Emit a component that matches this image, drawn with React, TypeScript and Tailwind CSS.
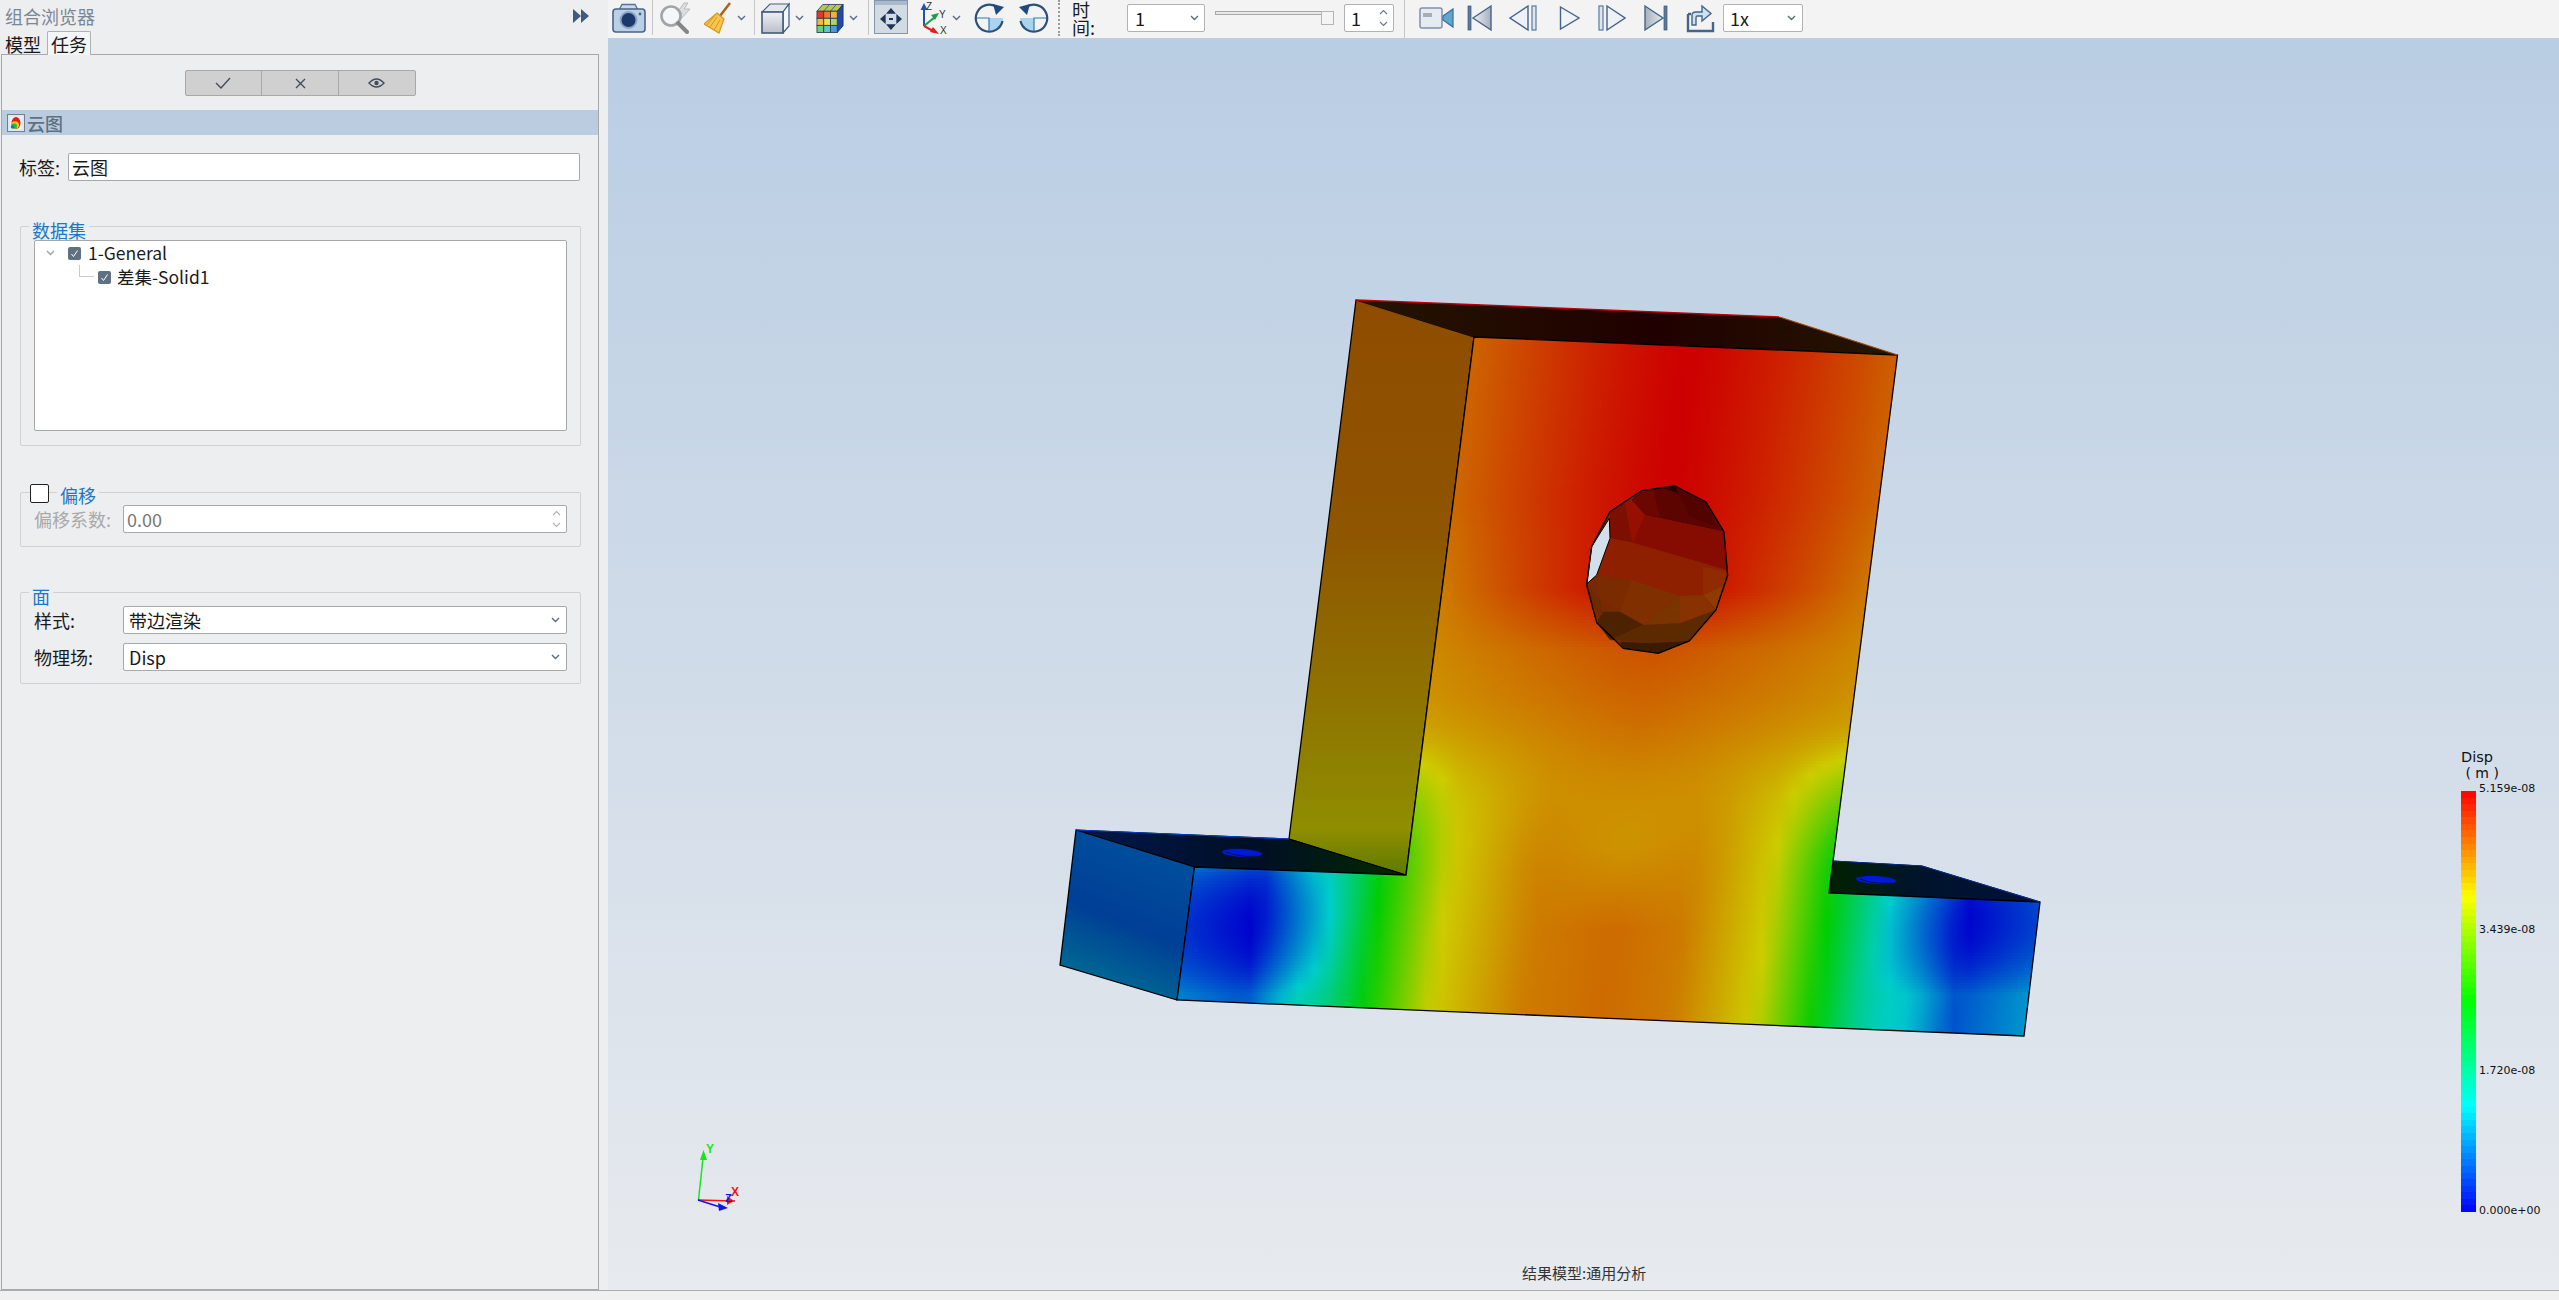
import React from "react";

/* ---------- scalar field and colour map of the result drawing ---------- */
const lerpTable = (tab: number[][], v: number) => {
  if (v <= tab[0][0]) return tab[0][1];
  for (let i = 1; i < tab.length; i++) {
    if (v <= tab[i][0]) {
      const k = (v - tab[i - 1][0]) / (tab[i][0] - tab[i - 1][0]);
      return tab[i - 1][1] + k * (tab[i][1] - tab[i - 1][1]);
    }
  }
  return tab[tab.length - 1][1];
};
const clamp = (v: number, a = 0, b = 1) => Math.max(a, Math.min(b, v));
const mapColor = (t: number, m: number) => {
  const st = [[0, 0, 1], [0, 1, 1], [0, 1, 0], [1, 1, 0], [1, 0, 0]];
  const p = clamp(t) * 4;
  const i = Math.min(3, Math.floor(p));
  const f = p - i;
  const c = [0, 1, 2].map((k) => Math.round((st[i][k] + (st[i + 1][k] - st[i][k]) * f) * m));
  return `rgb(${c[0]},${c[1]},${c[2]})`;
};
const tCenter = [[335, 1], [590, 1], [650, 0.9], [780, 0.84], [840, 0.82], [930, 0.87], [1040, 0.87]];
const tEdge = [[335, 0.88], [500, 0.875], [700, 0.82], [800, 0.76], [900, 0.75]];
const lowL = [[0, 0.87], [80, 0.85], [173, 0.75], [239, 0.5], [286, 0.25], [359, 0], [440, 0.07]];
const lowR = [[0, 0.87], [70, 0.85], [152, 0.75], [212, 0.5], [271, 0.25], [351, 0], [440, 0.1]];
const field = (x: number, y: number) => {
  const u = x + 0.13 * (y - 927);
  const d = Math.abs(u - 1614);
  const g = 1 - Math.pow(Math.min(d, 215) / 215, 1.3);
  const up = lerpTable(tEdge, y) + (lerpTable(tCenter, y) - lerpTable(tEdge, y)) * g;
  let low = lerpTable(u < 1614 ? lowL : lowR, d);
  low -= 0.05 * clamp((930 - y) / 80) * clamp(1 - d / 100);
  low += 0.1 * Math.min(1, ((y - 925) / 70) ** 2) * clamp((d - 250) / 60);
  const s0 = clamp((y - 720) / 160);
  const s = s0 * s0 * (3 - 2 * s0);
  return up * (1 - s) + low * s;
};
const strips: { y: number; stops: { o: number; c: string }[] }[] = [];
for (let y = 335; y < 1040; y += 3) {
  const stops: { o: number; c: string }[] = [];
  for (let x = 1170; x <= 2050; x += 16) {
    stops.push({ o: (x - 1170) / 880, c: mapColor(field(x, y + 1.5), 205) });
  }
  strips.push({ y, stops });
}
const bands = Array.from({ length: 64 }, (_, i) => mapColor(1 - (i + 0.5) / 64, 255));

/* ---------- the model ---------- */
const Model = () => (
  <svg viewBox="608 38 1951 1252" className="absolute inset-0 w-full h-full">
    <defs>
      {strips.map((s) => (
        <linearGradient key={s.y} id={`st${s.y}`} gradientUnits="userSpaceOnUse" x1="1170" x2="2050" y1="0" y2="0">
          {s.stops.map((p, i) => (
            <stop key={i} offset={p.o} stopColor={p.c} />
          ))}
        </linearGradient>
      ))}
      <clipPath id="frontClip">
        <polygon points="1474,337 1897.5,355 1829,893 2040,902 2024,1036 1177,1000 1194.5,867 1406,875" />
      </clipPath>
      <linearGradient id="sideG" gradientUnits="userSpaceOnUse" x1="0" y1="300" x2="0" y2="875">
        <stop offset="0" stopColor="#8f4c00" />
        <stop offset="0.4" stopColor="#8f5500" />
        <stop offset="0.7" stopColor="#8f7400" />
        <stop offset="0.92" stopColor="#8f8e00" />
        <stop offset="1" stopColor="#5d7a00" />
      </linearGradient>
      <linearGradient id="roofG" gradientUnits="userSpaceOnUse" x1="1360" y1="0" x2="1895" y2="0">
        <stop offset="0" stopColor="#241400" />
        <stop offset="0.55" stopColor="#200000" />
        <stop offset="1" stopColor="#241600" />
      </linearGradient>
      <linearGradient id="baseTL" gradientUnits="userSpaceOnUse" x1="1090" y1="0" x2="1400" y2="0">
        <stop offset="0" stopColor="#00164a" />
        <stop offset="0.55" stopColor="#000f24" />
        <stop offset="1" stopColor="#002800" />
      </linearGradient>
      <linearGradient id="baseTR" gradientUnits="userSpaceOnUse" x1="1830" y1="0" x2="2040" y2="0">
        <stop offset="0" stopColor="#002200" />
        <stop offset="0.4" stopColor="#00142a" />
        <stop offset="1" stopColor="#00103c" />
      </linearGradient>
      <linearGradient id="baseS" gradientUnits="userSpaceOnUse" x1="1150" y1="840" x2="1090" y2="985">
        <stop offset="0" stopColor="#00509e" />
        <stop offset="0.55" stopColor="#003f96" />
        <stop offset="1" stopColor="#006c92" />
      </linearGradient>
    </defs>

    <polygon points="1356,300 1474,337 1406,875 1289,839" fill="url(#sideG)" stroke="#000" strokeWidth="1.3" />
    <polygon points="1356,300 1779.5,317 1897.5,355 1474,337" fill="url(#roofG)" />
    <polygon points="1076,830 1289,839 1406,875 1194.5,867" fill="url(#baseTL)" stroke="#000" strokeWidth="1" />
    <polygon points="1832.5,861 1922,866 2040,902 1829,893" fill="url(#baseTR)" stroke="#000" strokeWidth="1" />
    <polygon points="1076,830 1194.5,867 1177,1000 1060,965" fill="url(#baseS)" stroke="#000" strokeWidth="1.3" />

    <g clipPath="url(#frontClip)">
      {strips.map((s) => (
        <rect key={s.y} x="1170" y={s.y} width="880" height="3.5" fill={`url(#st${s.y})`} />
      ))}
    </g>
    <polygon
      points="1474,337 1897.5,355 1829,893 2040,902 2024,1036 1177,1000 1194.5,867 1406,875"
      fill="none"
      stroke="#000"
      strokeWidth="1.3"
    />
    <path d="M1356 300 L1779.5 317" stroke="#b80000" strokeWidth="1.5" />
    <path d="M1779.5 317 L1897.5 355" stroke="#a04a00" strokeWidth="1.3" />
    <path d="M1076 830 L1289 839" stroke="#0040c0" strokeWidth="1.2" />
    <path d="M1832.5 861 L1922 866 L2040 902" stroke="#003090" strokeWidth="1.2" fill="none" />

    <ellipse cx="1242" cy="853" rx="20" ry="4" fill="#0018d8" transform="rotate(3 1242 853)" />
    <path d="M1226 852 Q1242 858 1258 856" stroke="#00104a" strokeWidth="1" fill="none" />
    <ellipse cx="1876" cy="880" rx="20" ry="4" fill="#0018d8" transform="rotate(3 1876 880)" />
    <path d="M1860 879 Q1876 885 1892 883" stroke="#00104a" strokeWidth="1" fill="none" />

    {/* hole */}
    <g transform="translate(1560 470) scale(0.3333)">
      <polygon points="345,48 438,96 492,185 503,316 468,420 388,513 295,550 190,535 110,458 80,345 95,230 150,125 245,62" fill="#7a2800" />
      <polygon points="245,62 345,48 438,96 492,185 255,135 215,90" fill="#5c0500" />
      <polygon points="310,55 345,48 395,85" fill="#2a0000" />
      <polygon points="240,65 215,90 255,135 300,140 280,60" fill="#6a0800" />
      <polygon points="345,48 438,96 470,170 390,140" fill="#520300" />
      <polygon points="150,125 195,100 218,218 150,205" fill="#7d0f00" />
      <polygon points="195,100 215,90 255,135 218,218" fill="#960f00" />
      <polygon points="255,135 492,185 500,300 218,218" fill="#860b00" />
      <polygon points="150,205 218,218 500,300 503,316 495,345 430,375 360,378 285,365 110,315" fill="#8e2000" />
      <polygon points="430,290 500,305 495,345 430,375" fill="#902a00" />
      <polygon points="110,315 215,330 180,425 122,390" fill="#7a2c00" />
      <polygon points="215,330 360,378 250,465 180,425" fill="#803000" />
      <polygon points="360,378 360,460 250,465" fill="#7a3400" />
      <polygon points="360,378 430,375 465,420 360,460" fill="#873200" />
      <polygon points="430,375 495,345 468,420" fill="#8f3a00" />
      <polygon points="80,345 122,390 130,458 95,395" fill="#6b2a00" />
      <polygon points="110,458 130,425 180,425 250,465 150,510" fill="#4d2200" />
      <polygon points="150,510 250,465 360,460 468,420 388,513 270,520" fill="#5d2a00" />
      <polygon points="180,515 270,520 388,513 295,550 190,535" fill="#3a1a00" />
      <polygon points="148,145 150,205 110,315 80,342 95,230" fill="#d3dfeb" stroke="#000" strokeWidth="3" />
      <polygon points="345,48 438,96 492,185 503,316 468,420 388,513 295,550 190,535 110,458 80,345 95,230 150,125 245,62" fill="none" stroke="#000" strokeWidth="4" />
    </g>

    {/* triad */}
    <g>
      <path d="M698.5 1200 L703 1158" stroke="#19e619" strokeWidth="1.5" />
      <polygon points="703.5,1150 700,1160 707,1160" fill="#19e619" />
      <path d="M698 1200 L735 1201" stroke="#f01414" strokeWidth="1.5" />
      <polygon points="734,1201 727,1196 727,1205" fill="#f01414" />
      <path d="M698 1200 L720 1207" stroke="#1414e6" strokeWidth="1.5" />
      <polygon points="728,1208 718,1203 719,1211" fill="#1414e6" />
      <text x="706" y="1153" fontSize="12" fontWeight="700" fill="#19e619" fontFamily="Liberation Sans, sans-serif">Y</text>
      <text x="731" y="1196" fontSize="12" fontWeight="700" fill="#f01414" fontFamily="Liberation Sans, sans-serif">X</text>
      <text x="725" y="1202" fontSize="11" fontWeight="700" fill="#1414e6" fontFamily="Liberation Sans, sans-serif">Z</text>
    </g>
  </svg>
);

/* ---------- small controls ---------- */
const Chevron = ({ className = "", color = "#5a6b7c" }: { className?: string; color?: string }) => (
  <svg viewBox="0 0 9 6" className={`w-[9px] h-[6px] shrink-0 ${className}`}>
    <path d="M1 1 L4.5 4.5 L8 1" fill="none" stroke={color} strokeWidth="1.4" />
  </svg>
);
const SpinArrows = ({ color = "#6a7a8a" }: { color?: string }) => (
  <div className="flex flex-col items-center gap-[6px]">
    <svg viewBox="0 0 9 6" className="w-[9px] h-[6px]">
      <path d="M1 5 L4.5 1.5 L8 5" fill="none" stroke={color} strokeWidth="1.2" />
    </svg>
    <svg viewBox="0 0 9 6" className="w-[9px] h-[6px]">
      <path d="M1 1 L4.5 4.5 L8 1" fill="none" stroke={color} strokeWidth="1.2" />
    </svg>
  </div>
);
const Check = () => (
  <div className="w-[13px] h-[13px] rounded-[2px] bg-[#5f7180] flex items-center justify-center shrink-0">
    <svg viewBox="0 0 9 9" className="w-[9px] h-[9px]">
      <path d="M1.5 5 L3.5 7.5 L7.5 1.5" fill="none" stroke="#fff" strokeWidth="1" />
    </svg>
  </div>
);
const Select = ({ label }: { label: string }) => (
  <div className="h-[28px] w-[444px] bg-white border border-[#a6a8aa] rounded-[2px] flex items-center justify-between pl-[5px] pr-[5px] text-[18px] text-[#1a1a1a] leading-none">
    <span>{label}</span>
    <Chevron className="mr-[1px]" />
  </div>
);
const Group = ({ height, className = "", children }: { height: string; className?: string; children: React.ReactNode }) => (
  <div className={`relative ml-[18px] w-[561px] border border-[#cfd1d3] rounded-[2px] ${height} ${className}`}>{children}</div>
);
const Sep = ({ h = "h-[35px]", ml }: { h?: string; ml: string }) => (
  <div className={`${ml} ${h} w-px bg-[#c4c6c8] self-start shrink-0`} />
);

/* ---------- toolbar icons ---------- */
const Camera = () => (
  <svg viewBox="0 0 34 30" className="w-[34px] h-[30px] ml-[4px] shrink-0">
    <path d="M7 7 L10 1.5 H23 L26 7" fill="#c9d9ea" stroke="#5a7496" strokeWidth="1.4" />
    <rect x="1" y="6" width="32" height="23" rx="3" fill="#bad0e7" stroke="#4a6488" strokeWidth="1.6" />
    <circle cx="16.5" cy="17" r="9" fill="#8ea4bf" />
    <circle cx="16.5" cy="17" r="7" fill="#1d386c" />
    <circle cx="28" cy="11" r="1.4" fill="#4a6488" />
  </svg>
);
const Magnifier = () => (
  <svg viewBox="0 0 33 32" className="w-[33px] h-[32px] ml-[6px] shrink-0">
    <polygon points="25,1 18,11 23,11 20,19 31,7 25,7 29,1" fill="#dcdee0" stroke="#b8babc" strokeWidth="1" />
    <circle cx="12" cy="14" r="9.5" fill="#f4f6f8" stroke="#a2a4a6" strokeWidth="2.6" />
    <path d="M19 21 L28 30" stroke="#868686" strokeWidth="4" strokeLinecap="round" />
  </svg>
);
const Broom = () => (
  <svg viewBox="0 0 27 32" className="w-[27px] h-[32px] ml-[12px] shrink-0">
    <path d="M26 1 L16 14" stroke="#a9651a" strokeWidth="2.6" />
    <polygon points="13,11 20,17 15,31 0,22" fill="#f5c550" stroke="#d9961e" strokeWidth="1.2" />
    <path d="M13 15 L6 25 M16 18 L10 28 M12 12 L3 23" stroke="#d9961e" strokeWidth="1" />
  </svg>
);
const Cube = () => (
  <svg viewBox="0 0 29 32" className="w-[29px] h-[32px] ml-[6px] shrink-0">
    <defs>
      <linearGradient id="cubeF" x1="0" y1="0" x2="0" y2="1">
        <stop offset="0" stopColor="#eef0f3" />
        <stop offset="1" stopColor="#b9c0ca" />
      </linearGradient>
    </defs>
    <polygon points="1,10 9,2 28,2 22,10" fill="#e4e7eb" stroke="#4a5f80" strokeWidth="1.2" />
    <polygon points="22,10 28,2 28,24 22,31" fill="#f5f6f8" stroke="#2f5a98" strokeWidth="1.2" />
    <rect x="1" y="10" width="21" height="21" fill="url(#cubeF)" stroke="#44597a" strokeWidth="1.6" />
  </svg>
);
const ColorCube = () => {
  const cols = [
    ["#e0392c", "#f0762c", "#f4b13a"],
    ["#f2b93a", "#e8e24a", "#a8dc58"],
    ["#6ad080", "#58c8c8", "#4a9ae0"],
  ];
  return (
    <svg viewBox="0 0 29 32" className="w-[28px] h-[32px] ml-[12px] shrink-0">
      <polygon points="1,9 7,2 28,2 22,9" fill="#b6c850" stroke="#3c4e70" strokeWidth="1" />
      <path d="M8 9 L14 2 M15 9 L21 2" stroke="#3c4e70" strokeWidth="0.8" />
      <polygon points="22,9 28,2 28,24 22,31" fill="#2048a8" stroke="#24386a" strokeWidth="1" />
      {cols.map((r, i) =>
        r.map((c, j) => <rect key={`${i}${j}`} x={1 + j * 7} y={9 + i * 7.33} width="7" height="7.33" fill={c} stroke="#2e3a55" strokeWidth="0.9" />),
      )}
    </svg>
  );
};
const MoveBtn = () => (
  <svg viewBox="0 0 34 34" className="w-[34px] h-[34px] ml-[5px] shrink-0 self-start">
    <rect x="0.5" y="0.5" width="33" height="33" fill="#d2dae3" stroke="#8494a9" />
    <rect x="1" y="1" width="32" height="4" fill="#a9bace" />
    <g fill="#1f3558" stroke="#1f3558" strokeWidth="1.3">
      <path d="M17 9 L13.5 13 H20.5 Z M17 29 L13.5 25 H20.5 Z M7 19 L11 15.5 V22.5 Z M27 19 L23 15.5 V22.5 Z" />
    </g>
    <rect x="15" y="18" width="4" height="2" fill="#1f3558" />
  </svg>
);
const Axes = () => (
  <svg viewBox="0 0 29 34" className="w-[29px] h-[34px] ml-[12px] shrink-0">
    <path d="M4 25 V8" stroke="#2452a8" strokeWidth="2" />
    <polygon points="4,2 0.5,9 7.5,9" fill="#2452a8" />
    <path d="M4 25 L15 16" stroke="#1e9a50" strokeWidth="2" />
    <polygon points="19,12 11,14 15,19" fill="#1e9a50" />
    <path d="M4 25 L15 31" stroke="#e02020" strokeWidth="2" />
    <polygon points="19,33 10,31 13,26" fill="#e02020" />
    <text x="6" y="9" fontSize="10" fill="#333" fontFamily="Liberation Sans, sans-serif">Z</text>
    <text x="19" y="17" fontSize="10" fill="#333" fontFamily="Liberation Sans, sans-serif">Y</text>
    <text x="20" y="33" fontSize="10" fill="#333" fontFamily="Liberation Sans, sans-serif">X</text>
  </svg>
);
const Rotate = ({ flip, ml }: { flip?: boolean; ml: string }) => (
  <svg viewBox="0 0 31 30" className={`w-[31px] h-[30px] ${ml} shrink-0`} style={flip ? { transform: "scaleX(-1)" } : undefined}>
    <path d="M15 15 H29 A14 14 0 0 1 15 29 Z" fill="#a8d4ef" />
    <path d="M1.5 15 H15 V29" fill="none" stroke="#2e7ab8" strokeWidth="1.2" />
    <path d="M22 3.5 A13.5 13.5 0 1 0 28.5 18 " fill="none" stroke="#2e5078" strokeWidth="2.2" />
    <polygon points="19,1 30,4 22,12" fill="#1f4a80" />
  </svg>
);
const Video = () => (
  <svg viewBox="0 0 35 28" className="w-[35px] h-[28px] ml-[14px] shrink-0">
    <rect x="1" y="4" width="22" height="20" rx="2" fill="#e6ebf1" stroke="#7d92ac" strokeWidth="1.5" />
    <rect x="4" y="9" width="9" height="4" fill="#a8adb3" />
    <polygon points="24,12 34,5 34,23 24,16" fill="#5ea7d0" stroke="#3f6d96" strokeWidth="1.2" />
  </svg>
);
const mediaGrad = (id: string, a: string, b: string) => (
  <linearGradient id={id} x1="0" y1="0" x2="1" y2="0">
    <stop offset="0" stopColor={a} />
    <stop offset="1" stopColor={b} />
  </linearGradient>
);
const First = () => (
  <svg viewBox="0 0 25 28" className="w-[25px] h-[28px] ml-[13px] shrink-0">
    <defs>{mediaGrad("mF", "#eef1f4", "#a6b0bc")}</defs>
    <rect x="1" y="2" width="3" height="24" fill="#5c7aa0" stroke="#3a5478" strokeWidth="0.7" />
    <polygon points="6,14 24,2 24,26" fill="url(#mF)" stroke="#44648c" strokeWidth="1.4" />
  </svg>
);
const Prev = () => (
  <svg viewBox="0 0 29 28" className="w-[29px] h-[28px] ml-[17px] shrink-0">
    <polygon points="1,14 19,2 19,26" fill="#eef1f5" stroke="#44648c" strokeWidth="1.4" />
    <rect x="23" y="2" width="4" height="24" fill="#dfe5ec" stroke="#5c7aa0" strokeWidth="1.2" />
  </svg>
);
const Play = () => (
  <svg viewBox="0 0 21 28" className="w-[21px] h-[28px] ml-[21px] shrink-0">
    <polygon points="1.5,3 20,14 1.5,25" fill="#f1f4f7" stroke="#44648c" strokeWidth="1.4" />
  </svg>
);
const Next = () => (
  <svg viewBox="0 0 28 28" className="w-[28px] h-[28px] ml-[18px] shrink-0">
    <rect x="1" y="2" width="4" height="24" fill="#dfe5ec" stroke="#5c7aa0" strokeWidth="1.2" />
    <polygon points="9,2 27,14 9,26" fill="#eef1f5" stroke="#44648c" strokeWidth="1.4" />
  </svg>
);
const Last = () => (
  <svg viewBox="0 0 24 28" className="w-[24px] h-[28px] ml-[18px] shrink-0">
    <defs>{mediaGrad("mL", "#a6b0bc", "#e6eaef")}</defs>
    <polygon points="1,2 19,14 1,26" fill="url(#mL)" stroke="#44648c" strokeWidth="1.4" />
    <rect x="20" y="2" width="3" height="24" fill="#5c7aa0" stroke="#3a5478" strokeWidth="0.7" />
  </svg>
);
const ExportIcon = () => (
  <svg viewBox="0 0 29 30" className="w-[29px] h-[30px] ml-[18px] shrink-0">
    <path d="M2 11 V28 H27 V19" fill="none" stroke="#44648c" strokeWidth="2.4" />
    <path d="M2 11 H5" fill="none" stroke="#44648c" strokeWidth="2.4" />
    <path d="M6 22 V12 Q6 9 10 9 H16 V3 L25 10.5 L16 18 V13 H11 Q10 13 10 15 V22 Z" fill="#cfe0ef" stroke="#44648c" strokeWidth="1.4" />
  </svg>
);

const Toolbar = () => (
  <div className="h-[38px] pb-[2px] bg-[#f3f3f3] flex items-center text-[18px] text-[#1a1a1a] leading-none">
    <Camera />
    <Sep ml="ml-[6px]" />
    <Magnifier />
    <Broom />
    <Chevron className="ml-[6px]" />
    <Sep ml="ml-[8px]" />
    <Cube />
    <Chevron className="ml-[5px]" />
    <ColorCube />
    <Chevron className="ml-[5px]" />
    <Sep ml="ml-[10px]" />
    <MoveBtn />
    <Axes />
    <Chevron className="ml-[3px]" />
    <Rotate ml="ml-[13px]" />
    <Rotate ml="ml-[13px]" flip />
    <div className="ml-[9px] h-[36px] w-[2px] border-l-2 border-dotted border-[#9a9a9a] self-start shrink-0" />
    <span className="ml-[12px] w-[40px] shrink-0">时间:</span>
    <div className="ml-[15px] w-[78px] h-[28px] bg-white border border-[#b0b2b4] rounded-[2px] flex items-center justify-between pl-[7px] pr-[5px] shrink-0">
      <span>1</span>
      <Chevron />
    </div>
    <div className="ml-[10px] w-[119px] h-[28px] relative shrink-0">
      <div className="absolute left-0 top-[7px] w-[108px] h-[4px] bg-[#e8e8e8] border border-[#a8a8a8]" />
      <div className="absolute right-0 top-[7px] w-[13px] h-[14px] bg-[#f4f4f4] border border-[#b4b4b4]" />
    </div>
    <div className="ml-[10px] w-[50px] h-[28px] bg-white border border-[#b0b2b4] rounded-[2px] flex items-center justify-between pl-[6px] pr-[5px] shrink-0">
      <span>1</span>
      <SpinArrows />
    </div>
    <Sep ml="ml-[10px]" h="h-[38px]" />
    <Video />
    <First />
    <Prev />
    <Play />
    <Next />
    <Last />
    <ExportIcon />
    <div className="ml-[8px] w-[80px] h-[28px] bg-white border border-[#b0b2b4] rounded-[2px] flex items-center justify-between pl-[6px] pr-[6px] shrink-0">
      <span>1x</span>
      <Chevron />
    </div>
  </div>
);

const Legend = () => (
  <div className="absolute left-[1853px] top-[711px] font-['DejaVu_Sans',sans-serif] text-[#111]">
    <div className="text-[14.5px] leading-[16px] h-[16px]">Disp</div>
    <div className="text-[14px] leading-[16px] h-[16px] whitespace-pre"> ( m )</div>
    <div className="h-[10px]" />
    <div className="flex">
      <div className="w-[15px] h-[421px] flex flex-col">
        {bands.map((c, i) => (
          <div key={i} className="flex-1" style={{ background: c }} />
        ))}
      </div>
      <div className="relative ml-[3px] w-[70px] text-[11px] leading-[14px]">
        <span className="absolute left-0 top-[-9px]">5.159e-08</span>
        <span className="absolute left-0 top-[132px]">3.439e-08</span>
        <span className="absolute left-0 top-[273px]">1.720e-08</span>
        <span className="absolute left-0 top-[413px]">0.000e+00</span>
      </div>
    </div>
  </div>
);

const LeftPanel = () => (
  <div className="w-[608px] h-full bg-[#eceef0] shrink-0 text-[18px] leading-none text-[#1a1a1a]">
    <div className="h-[31px] flex items-center justify-between pl-[5px] pr-[19px]">
      <span className="text-[#7b8794]">组合浏览器</span>
      <svg viewBox="0 0 16 14" className="w-[16px] h-[14px]">
        <path d="M0 0 L8 7 L0 14 Z M8 0 L16 7 L8 14 Z" fill="#3f5b7e" />
      </svg>
    </div>
    <div className="h-[23px] flex items-end pl-[5px]">
      <span className="h-[21px] w-[36px] flex items-center">模型</span>
      <div className="relative z-10 ml-[6px] -mb-px h-[24px] w-[44px] bg-[#f4f5f6] border border-[#aeb0b2] border-b-0 rounded-t-[2px] flex items-center justify-center">
        任务
      </div>
    </div>
    <div className="ml-px w-[598px] h-[1236px] border border-[#a6a8aa] pt-[15px]">
      <div className="mx-auto w-[231px] h-[26px] flex bg-[#d0d0d0] border border-[#a8a8a8] rounded-[2px]">
        <div className="flex-1 flex items-center justify-center">
          <svg viewBox="0 0 16 12" className="w-[16px] h-[12px]">
            <path d="M1 6 L6 11 L15 1" fill="none" stroke="#3e4e60" strokeWidth="1.4" />
          </svg>
        </div>
        <div className="flex-1 flex items-center justify-center border-x border-[#a8a8a8]">
          <svg viewBox="0 0 11 11" className="w-[11px] h-[11px]">
            <path d="M1 1 L10 10 M10 1 L1 10" stroke="#3e4e60" strokeWidth="1.4" />
          </svg>
        </div>
        <div className="flex-1 flex items-center justify-center">
          <svg viewBox="0 0 18 12" className="w-[17px] h-[12px]">
            <path d="M1 6 Q9 -2.5 17 6 Q9 14.5 1 6 Z" fill="none" stroke="#3e4e60" strokeWidth="1.4" />
            <circle cx="9" cy="6" r="2.3" fill="#3e4e60" />
          </svg>
        </div>
      </div>

      <div className="mt-[14px] h-[25px] bg-[#bacde0] flex items-center pl-[5px]">
        <svg viewBox="0 0 18 18" className="w-[18px] h-[18px] shrink-0">
          <rect x="0.5" y="0.5" width="17" height="17" fill="#dfe7ef" stroke="#6f8094" />
          <rect x="3" y="3" width="12" height="12" fill="#f0f3f6" />
          <ellipse cx="9" cy="9" rx="4.5" ry="6" fill="#e81c10" />
          <ellipse cx="8" cy="11" rx="4" ry="3.8" fill="#f4c414" />
          <ellipse cx="7" cy="12" rx="3" ry="2.6" fill="#18c040" />
          <ellipse cx="5.5" cy="13" rx="1.8" ry="1.5" fill="#1070e0" />
        </svg>
        <span className="ml-[2px] font-medium text-[#5f7082]">云图</span>
      </div>

      <div className="mt-[18px] ml-[17px] h-[28px] flex items-center">
        <span className="w-[49px]">标签:</span>
        <div className="w-[512px] h-[28px] bg-white border border-[#a6a8aa] rounded-[2px] flex items-center pl-[3px]">云图</div>
      </div>

      <Group height="h-[220px]" className="mt-[45px] pt-[13px] pl-[13px]">
        <span className="absolute left-[8px] top-[-6px] px-[3px] bg-[#eceef0] text-[#1a78c8]">数据集</span>
        <div className="relative w-[533px] h-[191px] bg-white border border-[#a6a8aa] rounded-[2px] text-[17.5px]">
          <div className="h-[24px] flex items-center">
            <Chevron className="ml-[11px]" color="#9aa4ae" />
            <div className="ml-[13px]">
              <Check />
            </div>
            <span className="ml-[7px]">1-General</span>
          </div>
          <div className="h-[24px] flex items-center">
            <div className="ml-[63px]">
              <Check />
            </div>
            <span className="ml-[6px]">差集-Solid1</span>
          </div>
          <div className="absolute left-[44px] top-[24px] w-[15px] h-[12px] border-l border-b border-[#c8cacc]" />
        </div>
      </Group>

      <Group height="h-[55px]" className="mt-[46px] pt-[12px] pl-[13px] flex items-start">
        <div className="absolute left-[9px] top-[-9px] w-[19px] h-[19px] bg-white border border-[#222] rounded-[2px]" />
        <span className="absolute left-[36px] top-[-7px] px-[3px] bg-[#eceef0] text-[#1a78c8]">偏移</span>
        <span className="w-[89px] h-[28px] flex items-center text-[#a9a9a9] shrink-0">偏移系数:</span>
        <div className="w-[444px] h-[28px] bg-white border border-[#a6a8aa] rounded-[2px] flex items-center justify-between pl-[3px] pr-[5px] text-[#777]">
          <span>0.00</span>
          <SpinArrows color="#b0b4b8" />
        </div>
      </Group>

      <Group height="h-[92px]" className="mt-[45px] pt-[13px] pl-[13px] flex flex-col gap-[9px]">
        <span className="absolute left-[8px] top-[-6px] px-[3px] bg-[#eceef0] text-[#1a78c8]">面</span>
        <div className="flex items-center">
          <span className="w-[89px] shrink-0">样式:</span>
          <Select label="带边渲染" />
        </div>
        <div className="flex items-center">
          <span className="w-[89px] shrink-0">物理场:</span>
          <Select label="Disp" />
        </div>
      </Group>
    </div>
  </div>
);

export default function App() {
  return (
    <div className="w-[2559px] h-[1300px] overflow-hidden bg-[#f0f0f0] font-['Noto_Sans_CJK_SC','Noto_Sans',sans-serif] flex flex-col">
      <div className="h-[1290px] flex">
        <LeftPanel />
        <div className="flex-1 flex flex-col min-w-0">
          <Toolbar />
          <div className="relative flex-1 bg-linear-to-b from-[#b9cde3] to-[#e7eaee]">
            <Model />
            <Legend />
            <span className="absolute left-[914px] top-[1226px] text-[15px] leading-[18px] text-[#333]">结果模型:通用分析</span>
          </div>
        </div>
      </div>
      <div className="h-[10px] border-t border-[#aaacae] bg-[#f0f0f0]" />
    </div>
  );
}
